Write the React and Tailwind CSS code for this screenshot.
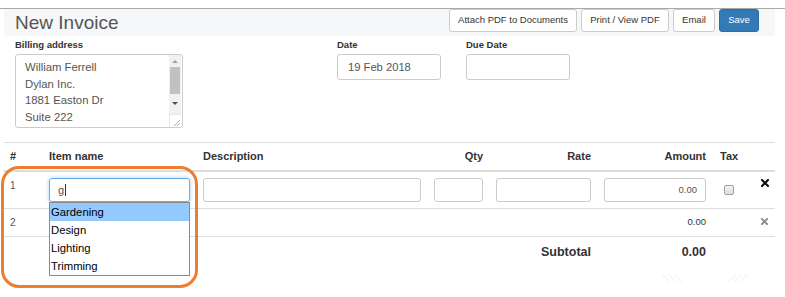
import React from "react";

const cols = "grid grid-cols-[39px_154px_231px_62px_108px_114px_38px_25px]";

function Btn({ w, children, primary }) {
  return (
    <button
      className={
        primary
          ? `${w} h-[23px] rounded-[3px] border border-[#2e6da4] bg-[#337ab7] text-white text-[9.5px] flex items-center justify-center`
          : `${w} h-[23px] rounded-[3px] border border-[#ccc] bg-white text-[#333] text-[9.5px] flex items-center justify-center`
      }
    >
      {children}
    </button>
  );
}

function Cross({ color, size = 8 }) {
  return (
    <svg width={size} height={size} viewBox="0 0 8 8">
      <path d="M1 1L7 7M7 1L1 7" stroke={color} strokeWidth="2.2" strokeLinecap="square" />
    </svg>
  );
}

const inputCls = "h-[24px] border border-[#ccc] rounded-[3px] bg-white";

export default function App() {
  return (
    <div className="relative w-[785px] h-[297px] overflow-hidden bg-white text-[#333] font-['Liberation_Sans',Arial,sans-serif]">
      <div className="pt-2">
        <div className="border-t border-[#a9a9a9]" />
        <div className="ml-1 w-[771px] h-[27px] bg-[#f6f7f9] flex items-start">
          <h1 className="pl-[11px] pt-[3px] text-[19px] leading-[22px] text-[#555]">New Invoice</h1>
          <div className="ml-auto mr-4 flex gap-1">
            <Btn w="w-[128px]">Attach PDF to Documents</Btn>
            <Btn w="w-[88px]">Print / View PDF</Btn>
            <Btn w="w-[42px]">Email</Btn>
            <Btn w="w-[40px]" primary>Save</Btn>
          </div>
        </div>
      </div>

      {/* billing + dates */}
      <div className="flex h-[106px] pl-[15px]">
        <div className="w-[168px]">
          <div className="h-[18px] pt-[3px] text-[9.5px] leading-[11px] font-bold">Billing address</div>
          <div className="relative h-[74px] border border-[#ccc] rounded-[3px] overflow-hidden">
            <div className="pl-[9px] pt-[4px] text-[11.3px] leading-[16.5px] text-[#555]">
              <div>William Ferrell</div>
              <div>Dylan Inc.</div>
              <div>1881 Easton Dr</div>
              <div>Suite 222</div>
              <div>Albany, GA</div>
            </div>
            <div className="absolute right-[1px] top-0 w-[12px] h-[60px] bg-[#f1f1f1] flex flex-col items-center">
              <div className="mt-[5px] w-0 h-0 border-l-[3px] border-r-[3px] border-b-[3px] border-l-transparent border-r-transparent border-b-[#a3a3a3]" />
              <div className="mt-[4px] w-[10px] h-[27px] bg-[#c1c1c1]" />
              <div className="mt-[8px] w-0 h-0 border-l-[3px] border-r-[3px] border-t-[3px] border-l-transparent border-r-transparent border-t-[#505050]" />
            </div>
            <div className="absolute right-[1px] bottom-0 w-[12px] h-[13px] bg-white border-l border-t border-[#e5e5e5]">
              <svg width="12" height="13" viewBox="0 0 12 13" className="block">
                <path d="M4 11L10 5M7 11L10 8" stroke="#9a9a9a" strokeWidth="0.8" />
              </svg>
            </div>
          </div>
        </div>
        <div className="ml-[154px] w-[104px]">
          <div className="h-[18px] pt-[3px] text-[9.5px] leading-[11px] font-bold">Date</div>
          <div className="h-[26px] border border-[#ccc] rounded-[3px] pl-[10px] flex items-center text-[11.2px] text-[#555]">
            19 Feb 2018
          </div>
        </div>
        <div className="ml-[25px] w-[104px]">
          <div className="h-[18px] pt-[3px] text-[9.5px] leading-[11px] font-bold">Due Date</div>
          <div className="h-[26px] border border-[#ccc] rounded-[3px]" />
        </div>
      </div>

      {/* items table */}
      <div className="ml-1 w-[771px] border-t border-[#ddd]">
        <div className={`${cols} h-[29px] items-center border-b-2 border-[#ddd] text-[11px] font-bold`}>
          <div className="pl-[6px]">#</div>
          <div className="pl-[6px]">Item name</div>
          <div className="pl-[6px]">Description</div>
          <div className="pr-[7px] text-right">Qty</div>
          <div className="pr-[7px] text-right">Rate</div>
          <div className="pr-[6px] text-right">Amount</div>
          <div className="pl-[8px]">Tax</div>
          <div />
        </div>

        <div className={`${cols} h-[37px] items-start border-b border-[#ddd]`}>
          <div className="pl-[6px] pt-[8px] text-[10px] leading-[12px] text-[#555]">1</div>
          <div className="pl-[6px] pt-[6px]">
            <div className="w-[141px] h-[24px] border border-[#66afe9] rounded-[3px] shadow-[0_0_4px_rgba(102,175,233,0.6)] pl-[8px] flex items-center text-[11px] text-[#555]">
              g<span className="ml-[1px] w-px h-[12px] bg-[#333]" />
            </div>
          </div>
          <div className="pl-[6px] pt-[6px]"><div className={`w-[218px] ${inputCls}`} /></div>
          <div className="pl-[6px] pt-[6px]"><div className={`w-[49px] ${inputCls}`} /></div>
          <div className="pl-[6px] pt-[6px]"><div className={`w-[95px] ${inputCls}`} /></div>
          <div className="pl-[6px] pt-[6px]">
            <div className={`w-[102px] ${inputCls} flex items-center justify-end pr-[8px] text-[9.5px] text-[#555]`}>0.00</div>
          </div>
          <div className="pl-[12px] pt-[13px]">
            <div className="w-[10px] h-[10px] rounded-[2px] border border-[#a0a0a0] bg-gradient-to-b from-[#f4f4f4] to-[#dcdcdc]" />
          </div>
          <div className="pl-[11px] pt-[7px]"><Cross color="#111" /></div>
        </div>

        <div className={`${cols} h-[28px] items-center border-b border-[#ddd] text-[9.5px]`}>
          <div className="pl-[6px] text-[10px] text-[#555]">2</div>
          <div />
          <div />
          <div />
          <div />
          <div className="pr-[6px] text-right">0.00</div>
          <div />
          <div className="pl-[11px] pb-[2px]"><Cross color="#8a8a8a" size={7} /></div>
        </div>

        <div className={`${cols} h-[30px] items-center text-[12.5px] font-bold`}>
          <div />
          <div />
          <div />
          <div />
          <div className="pr-[7px] text-right">Subtotal</div>
          <div className="pr-[6px] text-right">0.00</div>
          <div />
          <div />
        </div>
      </div>

      {/* autocomplete list */}
      <div className="absolute left-[49px] top-[202px] w-[141px] h-[74px] border border-[#8a8a8a] bg-white text-[11.3px] leading-[18px] text-black">
        <div className="bg-[#93c9ff] pl-[1px]">Gardening</div>
        <div className="pl-[1px]">Design</div>
        <div className="pl-[1px]">Lighting</div>
        <div className="pl-[1px]">Trimming</div>
      </div>

      {/* highlight annotation */}
      <div className="absolute left-[1px] top-[166px] w-[197px] h-[122px] border-[3.5px] border-[#ed7d31] rounded-[18px] pointer-events-none" />

      {/* faint watermark */}
      <svg className="absolute left-[660px] top-[272px]" width="90" height="12" viewBox="0 0 90 12">
        <path d="M2 2L10 10M8 2L16 10M14 2L22 10" stroke="#f8f8f8" strokeWidth="2" />
        <path d="M68 10L76 2M74 10L82 2M80 10L88 2" stroke="#f8f8f8" strokeWidth="2" />
      </svg>
    </div>
  );
}
